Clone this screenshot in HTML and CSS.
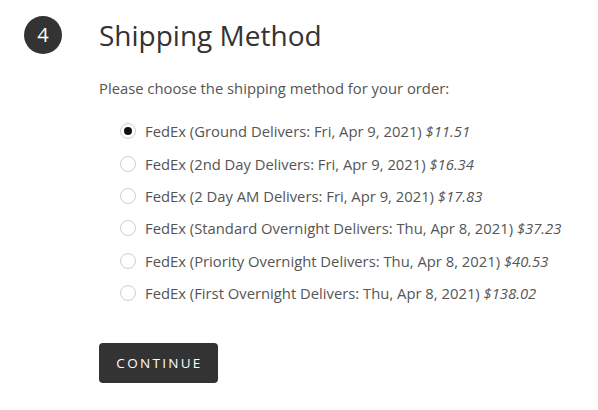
FILE: index.html
```html
<!DOCTYPE html>
<html>
<head>
<meta charset="utf-8">
<link rel="stylesheet" href="styles.css">
</head>
<body>
<section class="step">
  <header class="step-head">
    <span class="step-num">4</span>
    <h2 class="step-title">Shipping Method</h2>
  </header>
  <div class="step-body">
    <p class="intro">Please choose the shipping method for your order:</p>
    <ul class="options">
      <li class="option"><span class="radio checked"></span><span class="label">FedEx (Ground Delivers: Fri, Apr 9, 2021) <em>$11.51</em></span></li>
      <li class="option"><span class="radio"></span><span class="label">FedEx (2nd Day Delivers: Fri, Apr 9, 2021) <em>$16.34</em></span></li>
      <li class="option"><span class="radio"></span><span class="label">FedEx (2 Day AM Delivers: Fri, Apr 9, 2021) <em>$17.83</em></span></li>
      <li class="option"><span class="radio"></span><span class="label">FedEx (Standard Overnight Delivers: Thu, Apr 8, 2021) <em>$37.23</em></span></li>
      <li class="option"><span class="radio"></span><span class="label">FedEx (Priority Overnight Delivers: Thu, Apr 8, 2021) <em>$40.53</em></span></li>
      <li class="option"><span class="radio"></span><span class="label">FedEx (First Overnight Delivers: Thu, Apr 8, 2021) <em>$138.02</em></span></li>
    </ul>
    <button class="continue">CONTINUE</button>
  </div>
</section>
</body>
</html>
```
FILE: styles.css
```css
* { box-sizing: border-box; }
html, body { margin: 0; padding: 0; background: #fff; }
body {
  font-family: "Open Sans", "Liberation Sans", sans-serif;
  color: #333;
}
.step { padding: 16px 0 0 24px; }
.step-head {
  display: flex;
  align-items: center;
  gap: 37px;
}
.step-num {
  width: 38px;
  height: 38px;
  border-radius: 50%;
  background: #333;
  color: #fff;
  display: flex;
  align-items: center;
  justify-content: center;
  font-size: 20px;
  line-height: 1;
}
.step-title {
  margin: 0;
  font-size: 28px;
  font-weight: 400;
  color: #333;
  line-height: 38px;
}
.step-body { padding-left: 75px; }
.intro {
  margin: 24px 0 0;
  font-size: 14.8px;
  color: #555;
  line-height: 20px;
}
.options {
  list-style: none;
  margin: 17px 0 0;
  padding: 0 0 0 21px;
}
.option {
  display: flex;
  align-items: center;
  gap: 9px;
  height: 32.4px;
  font-size: 14.8px;
  line-height: 20px;
  color: #555;
}
.option em { font-style: italic; }
.radio {
  width: 16px;
  height: 16px;
  border-radius: 50%;
  border: 1px solid #cfcfcf;
  background: #fff;
  display: flex;
  align-items: center;
  justify-content: center;
  flex: none;
}
.radio.checked::after {
  content: "";
  width: 8px;
  height: 8px;
  border-radius: 50%;
  background: #111;
}
.continue {
  margin-top: 34px;
  width: 119px;
  height: 40px;
  border: none;
  border-radius: 4px;
  background: #333;
  color: #fff;
  font-family: "Open Sans", "Liberation Sans", sans-serif;
  font-size: 13.5px;
  letter-spacing: 2.3px;
  padding: 0 0 0 2px;
}
```
